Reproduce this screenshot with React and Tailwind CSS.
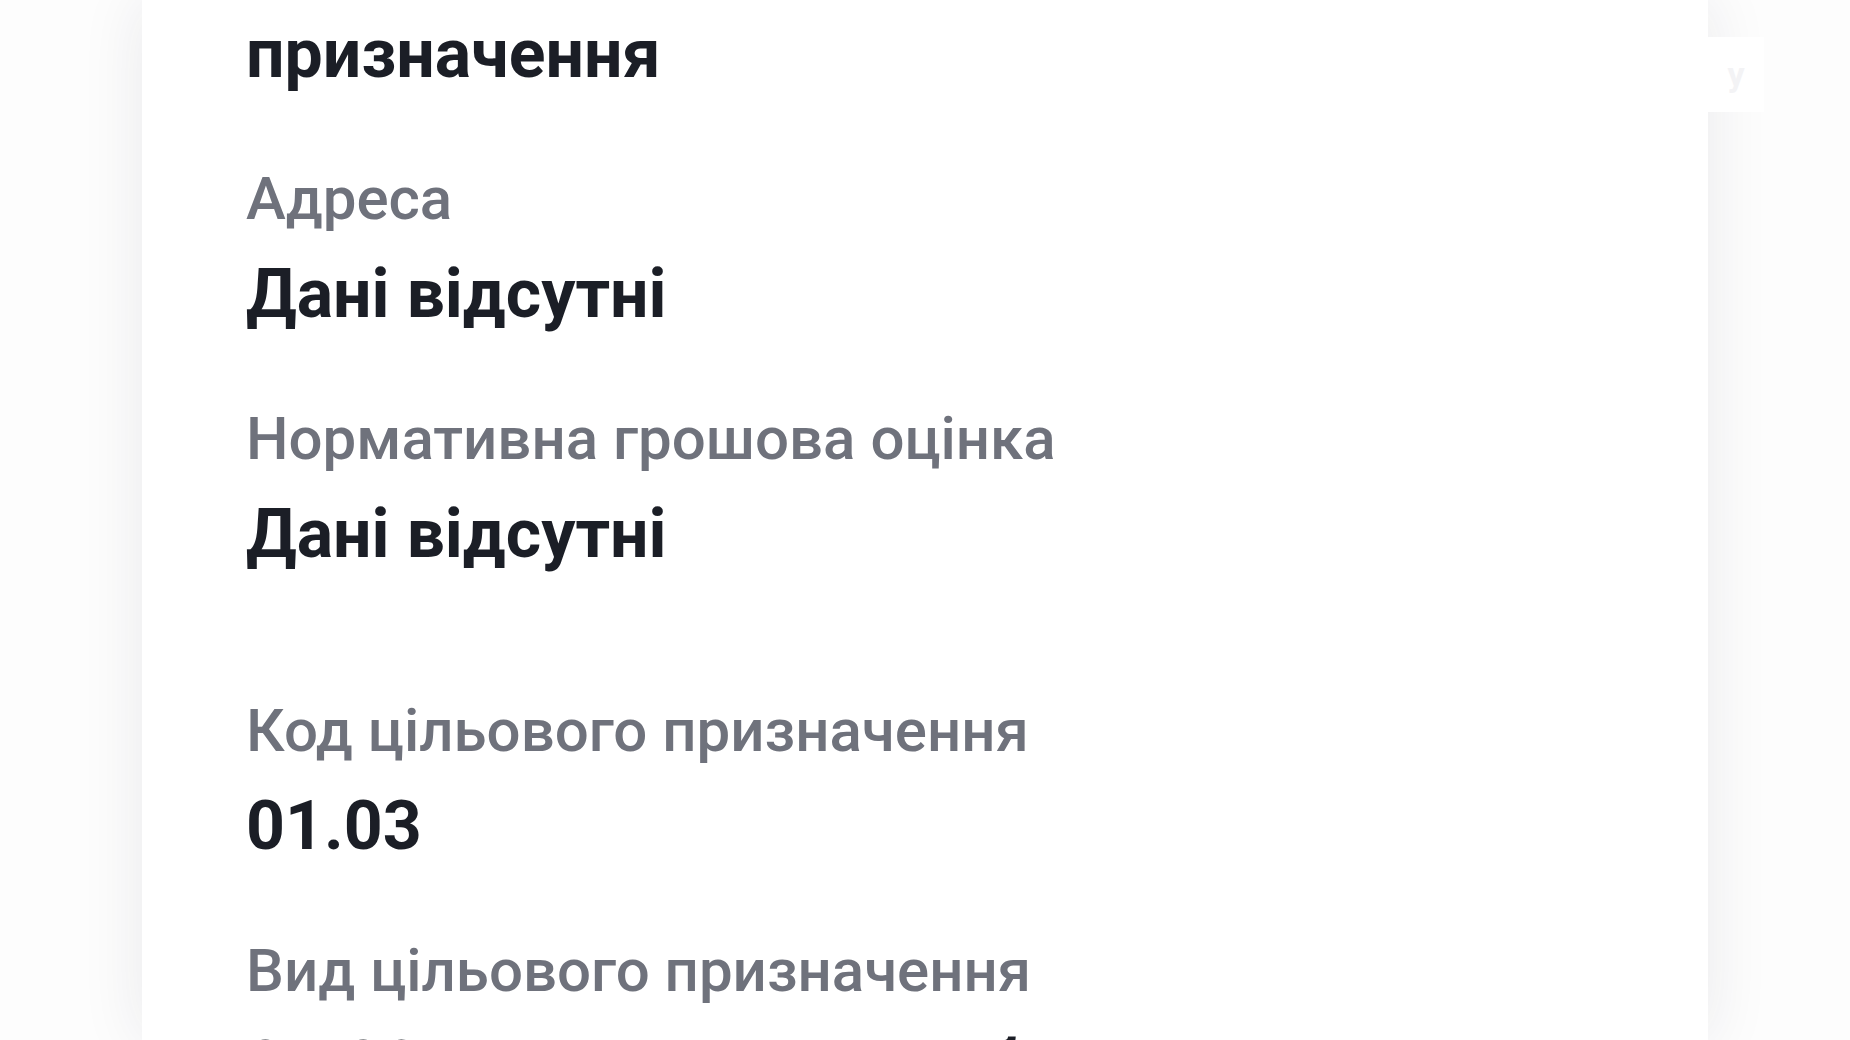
import React from "react";

const fields = [
  { label: null, value: "призначення" },
  { label: "Адреса", value: "Дані відсутні" },
  { label: "Нормативна грошова оцінка", value: "Дані відсутні", extra: true },
  { label: "Код цільового призначення", value: "01.03" },
  { label: "Вид цільового призначення", value: "01.03 Для ведення особистого селянського господарства" },
];

const Field = ({ label, value, extra }) => (
  <div className={extra ? "mb-[119px]" : "mb-[67px]"}>
    {label && (
      <p className="text-[60px] leading-[72px] font-medium text-[#6f727c] mb-[17px]">
        {label}
      </p>
    )}
    <p className="text-[68px] leading-[84px] font-bold text-[#1b1e26]">{value}</p>
  </div>
);

const App = () => {
  return (
    <div
      className="relative h-[1040px] w-[1850px] overflow-hidden bg-[#fdfdfd]"
      style={{ fontFamily: "Roboto, 'Noto Sans', sans-serif" }}
    >
      <div className="ml-[142px] h-full w-[1566px] bg-white shadow-[0_0_60px_rgba(30,30,50,0.09)]">
        <div className="pl-[104px] pt-[12px] pr-[104px]">
          {fields.map((f, i) => (
            <Field key={i} {...f} />
          ))}
        </div>
      </div>
      {/* faded overlay in the top right corner */}
      <div className="absolute left-[1708px] top-[37px] flex h-[75px] w-[56px] items-center justify-center bg-white">
        <span className="text-[34px] font-bold text-[#f3f3f5]">у</span>
      </div>
    </div>
  );
};

export default App;
